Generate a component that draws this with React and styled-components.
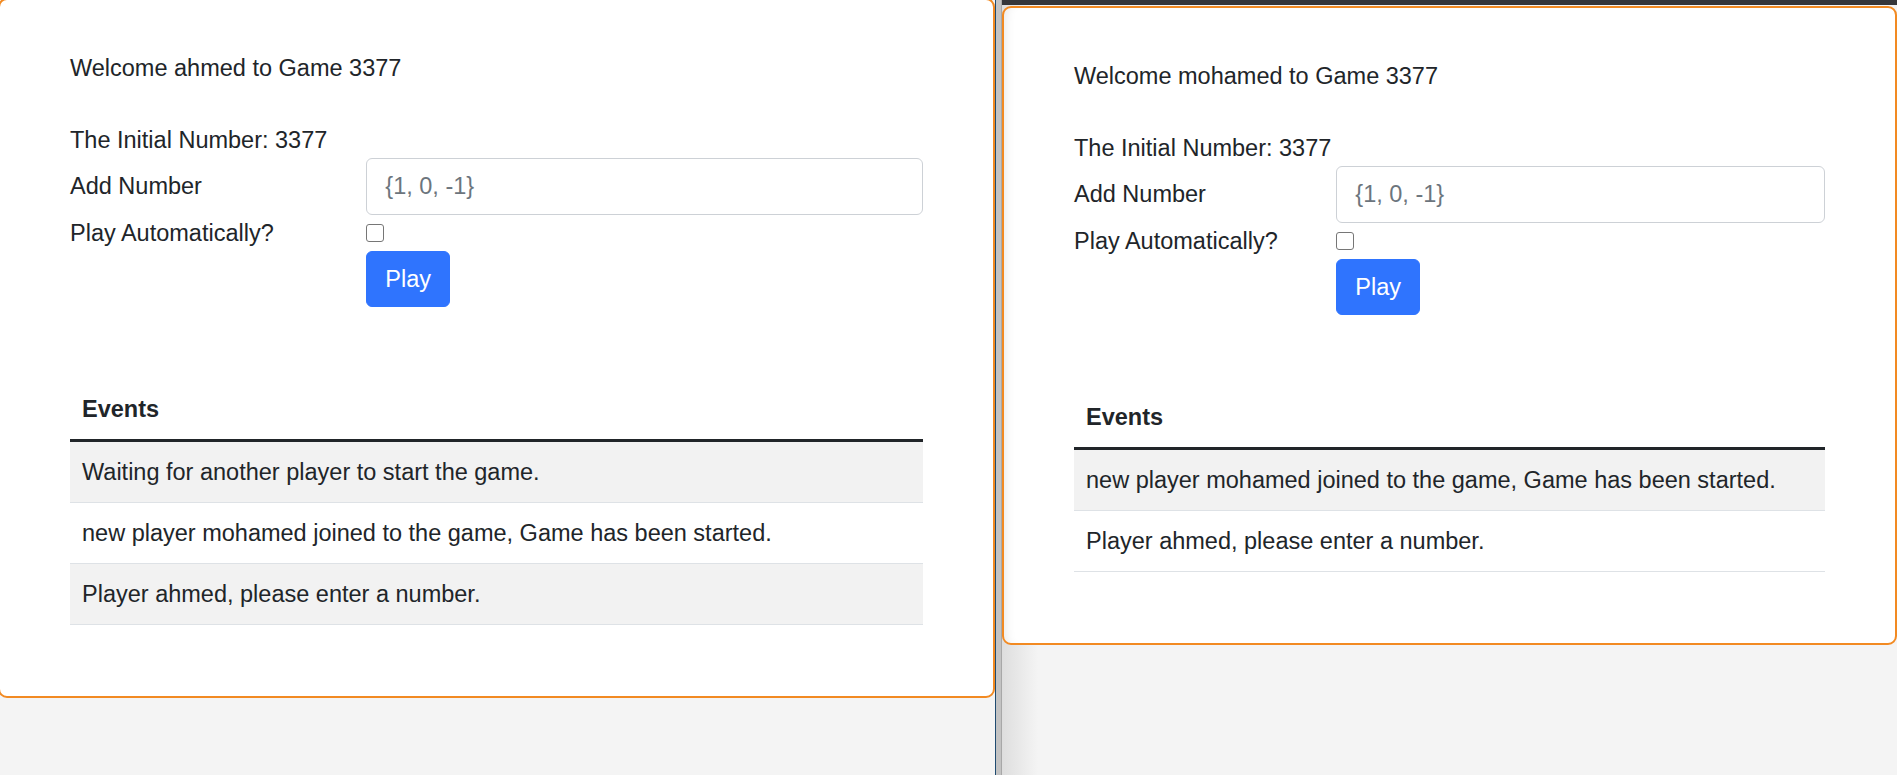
import React from "react";
import styled, { createGlobalStyle } from "styled-components";

const GlobalStyle = createGlobalStyle`
  html, body {
    margin: 0;
    padding: 0;
    background: #f4f4f4;
    overflow: hidden;
  }
  body {
    font-family: "Segoe UI", "Liberation Sans", Arial, sans-serif;
    color: #212529;
  }
`;

const Desktop = styled.div`
  display: flex;
  width: 1897px;
  height: 775px;
  overflow: hidden;
`;

const LeftWindow = styled.div`
  width: 995px;
  flex-shrink: 0;
  overflow: hidden;
  background: #f4f4f4;
`;

const Divider = styled.div`
  width: 7px;
  flex-shrink: 0;
  box-sizing: border-box;
  border-left: 1px solid #1f4b70;
  border-right: 1px solid #a8a8a8;
  background: #c3c3c3;
`;

const RightWindow = styled.div`
  flex: 1;
  display: flex;
  flex-direction: column;
  background: linear-gradient(to right, #dedede, #f4f4f4 36px);
`;

const TitleBar = styled.div`
  height: 5px;
  background: #35363a;
`;

const Card = styled.div`
  box-sizing: border-box;
  background: #fff;
  border: 2px solid #f28a22;
  border-radius: 9px;
  padding: 50px 70px 71px;
  margin-top: ${(p) => p.$top}px;
  margin-left: ${(p) => p.$left}px;
  width: calc(100% - ${(p) => p.$left}px);
  box-shadow: ${(p) => (p.$shade ? "inset 10px 0 12px -10px rgba(0,0,0,0.12)" : "none")};
`;

const Line = styled.div`
  font-size: 23.5px;
  line-height: 36px;
  margin-bottom: ${(p) => p.$gap || 0}px;
`;

const FormGrid = styled.div`
  display: grid;
  grid-template-columns: calc((100% + 36px) / 3 - 36px) 1fr;
  column-gap: 36px;
  align-items: start;
  font-size: 23.5px;
  line-height: 36px;
`;

const FieldLabel = styled.label`
  padding-top: ${(p) => (p.$form ? 10 : 0)}px;
`;

const TextInput = styled.input`
  box-sizing: border-box;
  width: 100%;
  height: 57px;
  padding: 0 18px;
  border: 1px solid #cdd1d6;
  border-radius: 6px;
  font: inherit;
  color: #212529;
  outline: none;
  &::placeholder {
    color: #6c757d;
  }
`;

const CheckCell = styled.div`
  height: 36px;
  display: flex;
  align-items: center;
`;

const Check = styled.input`
  appearance: none;
  margin: 0;
  width: 18px;
  height: 18px;
  box-sizing: border-box;
  border: 1.5px solid #767676;
  border-radius: 3px;
  background: #fff;
`;

const PlayButton = styled.button`
  justify-self: start;
  padding: 9px 18px;
  border: 1px solid #2f74fe;
  border-radius: 6px;
  background: #2f74fe;
  color: #fff;
  font: inherit;
  cursor: pointer;
`;

const EventsTable = styled.table`
  width: 100%;
  margin-top: 72px;
  border-collapse: collapse;
  font-size: 23.5px;
  line-height: 36px;

  th {
    text-align: left;
    font-weight: 700;
    padding: 12px;
    border-bottom: 3px solid #212529;
  }

  td {
    padding: 12px;
    border-bottom: 1px solid #dee2e6;
  }

  tbody tr:nth-child(odd) td {
    background: #f2f2f2;
  }
`;

const GamePanel = ({ player, events, top, left, shade }) => (
  <Card $top={top} $left={left} $shade={shade}>
    <Line $gap={36}>Welcome {player} to Game 3377</Line>
    <Line>The Initial Number: 3377</Line>
    <FormGrid>
      <FieldLabel $form>Add Number</FieldLabel>
      <TextInput placeholder="{1, 0, -1}" />
      <FieldLabel>Play Automatically?</FieldLabel>
      <CheckCell>
        <Check type="checkbox" />
      </CheckCell>
      <span />
      <PlayButton>Play</PlayButton>
    </FormGrid>
    <EventsTable>
      <thead>
        <tr>
          <th>Events</th>
        </tr>
      </thead>
      <tbody>
        {events.map((e, i) => (
          <tr key={i}>
            <td>{e}</td>
          </tr>
        ))}
      </tbody>
    </EventsTable>
  </Card>
);

export default function App() {
  return (
    <>
      <GlobalStyle />
      <Desktop>
        <LeftWindow>
          <GamePanel
            player="ahmed"
            top={-2}
            left={-2}
            events={[
              "Waiting for another player to start the game.",
              "new player mohamed joined to the game, Game has been started.",
              "Player ahmed, please enter a number.",
            ]}
          />
        </LeftWindow>
        <Divider />
        <RightWindow>
          <TitleBar />
          <GamePanel
            player="mohamed"
            top={1}
            left={0}
            shade
            events={[
              "new player mohamed joined to the game, Game has been started.",
              "Player ahmed, please enter a number.",
            ]}
          />
        </RightWindow>
      </Desktop>
    </>
  );
}
